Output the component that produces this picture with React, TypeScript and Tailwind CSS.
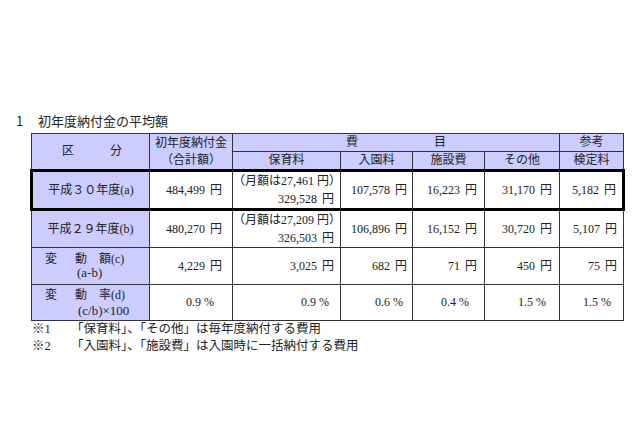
import React from "react";

// Shared cell styles
const cell = "border border-[#333] p-0 align-middle whitespace-nowrap";
const head = `${cell} bg-[#ccccff] text-center`;
const label = `${cell} bg-[#ccccff]`;
const num = `${cell} bg-white text-right`;
// Row (a) is framed by a heavy rule
const thickTop = "border-t-[3px] border-b-[3px] border-t-black border-b-black";

// Amount followed by its unit, with the wide gap of the original typesetting
function Amt({ v, unit = "円" }: { v: string; unit?: string }) {
  return (
    <>
      {v}
      <span className={unit === "%" ? "ml-[3px]" : "ml-[5px]"}>{unit}</span>
    </>
  );
}

export default function App() {
  return (
    <div
      className="w-[640px] h-[426px] bg-white pt-[112px] text-[#222]"
      style={{ fontFamily: '"Liberation Serif", "Noto Sans CJK JP", serif' }}
    >
      {/* Section title */}
      <div className="h-[17px] flex items-center pl-[16px] text-[13px] leading-[17px] font-['Noto_Sans_CJK_JP',sans-serif]">
        <span className="w-[22px]">1</span>
        <span>初年度納付金の平均額</span>
      </div>

      <table className="ml-[30px] mt-[4px] w-[592px] table-fixed border-collapse text-[12px] leading-[17px]">
        <colgroup>
          <col className="w-[118px]" />
          <col className="w-[83px]" />
          <col className="w-[108px]" />
          <col className="w-[72px]" />
          <col className="w-[72px]" />
          <col className="w-[75px]" />
          <col className="w-[64px]" />
        </colgroup>
        <tbody>
          {/* ── Header ─────────────────────────── */}
          <tr className="h-[18px]">
            <td rowSpan={2} className={head}>
              <span className="pl-[3px]">区　　　分</span>
            </td>
            <td rowSpan={2} className={head}>
              初年度納付金
              <br />
              （合計額）
            </td>
            <td colSpan={4} className={head}>
              <div className="flex justify-center gap-[76px]">
                <span>費</span>
                <span>目</span>
              </div>
            </td>
            <td className={head}>参考</td>
          </tr>
          <tr className="h-[19px]">
            <td className={head}>保育料</td>
            <td className={head}>入園料</td>
            <td className={head}>施設費</td>
            <td className={head}>その他</td>
            <td className={head}>検定料</td>
          </tr>

          {/* ── 平成30年度 (a) ──────────────────── */}
          <tr className="h-[37px]">
            <td className={`${label} ${thickTop} border-l-[3px] border-l-black text-center`}>
              平成３０年度(a)
            </td>
            <td className={`${num} ${thickTop} pr-[10px]`}><Amt v="484,499" /></td>
            <td className={`${num} ${thickTop} leading-[18px]`}>
              <div className="pr-[1px]">（月額は27,461 円）</div>
              <div className="pr-[6px]"><Amt v="329,528" /></div>
            </td>
            <td className={`${num} ${thickTop} pr-[5px]`}><Amt v="107,578" /></td>
            <td className={`${num} ${thickTop} pr-[7px]`}><Amt v="16,223" /></td>
            <td className={`${num} ${thickTop} pr-[7px]`}><Amt v="31,170" /></td>
            <td className={`${num} ${thickTop} border-r-[3px] border-r-black pr-[6px]`}><Amt v="5,182" /></td>
          </tr>

          {/* ── 平成29年度 (b) ──────────────────── */}
          <tr className="h-[38px]">
            <td className={`${label} text-center`}>平成２９年度(b)</td>
            <td className={`${num} pr-[10px]`}><Amt v="480,270" /></td>
            <td className={`${num} leading-[18px]`}>
              <div className="pr-[1px]">（月額は27,209 円）</div>
              <div className="pr-[6px]"><Amt v="326,503" /></div>
            </td>
            <td className={`${num} pr-[5px]`}><Amt v="106,896" /></td>
            <td className={`${num} pr-[7px]`}><Amt v="16,152" /></td>
            <td className={`${num} pr-[7px]`}><Amt v="30,720" /></td>
            <td className={`${num} pr-[6px]`}><Amt v="5,107" /></td>
          </tr>

          {/* ── 変動額 (c) ──────────────────────── */}
          <tr className="h-[37px]">
            <td className={`${label} leading-[14px]`}>
              <div className="flex pl-[13px]">
                <span className="mr-[18px]">変</span>
                <span className="mr-[12px]">動</span>
                <span>額(c)</span>
              </div>
              <div className="pl-[45px] text-[13px]">(a-b)</div>
            </td>
            <td className={`${num} pr-[10px]`}><Amt v="4,229" /></td>
            <td className={`${num} pr-[6px]`}><Amt v="3,025" /></td>
            <td className={`${num} pr-[5px]`}><Amt v="682" /></td>
            <td className={`${num} pr-[7px]`}><Amt v="71" /></td>
            <td className={`${num} pr-[7px]`}><Amt v="450" /></td>
            <td className={`${num} pr-[6px]`}><Amt v="75" /></td>
          </tr>

          {/* ── 変動率 (d) ──────────────────────── */}
          <tr className="h-[36px]">
            <td className={`${label} leading-[16px]`}>
              <div className="flex pl-[13px]">
                <span className="mr-[18px]">変</span>
                <span className="mr-[12px]">動</span>
                <span>率(d)</span>
              </div>
              <div className="pl-[46px] text-[13px]">(c/b)×100</div>
            </td>
            <td className={`${num} pr-[18px]`}><Amt v="0.9" unit="%" /></td>
            <td className={`${num} pr-[11px]`}><Amt v="0.9" unit="%" /></td>
            <td className={`${num} pr-[9px]`}><Amt v="0.6" unit="%" /></td>
            <td className={`${num} pr-[15px]`}><Amt v="0.4" unit="%" /></td>
            <td className={`${num} pr-[13px]`}><Amt v="1.5" unit="%" /></td>
            <td className={`${num} pr-[12px]`}><Amt v="1.5" unit="%" /></td>
          </tr>
        </tbody>
      </table>

      {/* Footnotes */}
      <div className="pl-[32px] text-[12.5px] leading-[17px]">
        <div className="flex">
          <span className="w-[39px]">※1</span>
          <span>「保育料」、「その他」は毎年度納付する費用</span>
        </div>
        <div className="flex">
          <span className="w-[39px]">※2</span>
          <span>「入園料」、「施設費」は入園時に一括納付する費用</span>
        </div>
      </div>
    </div>
  );
}
